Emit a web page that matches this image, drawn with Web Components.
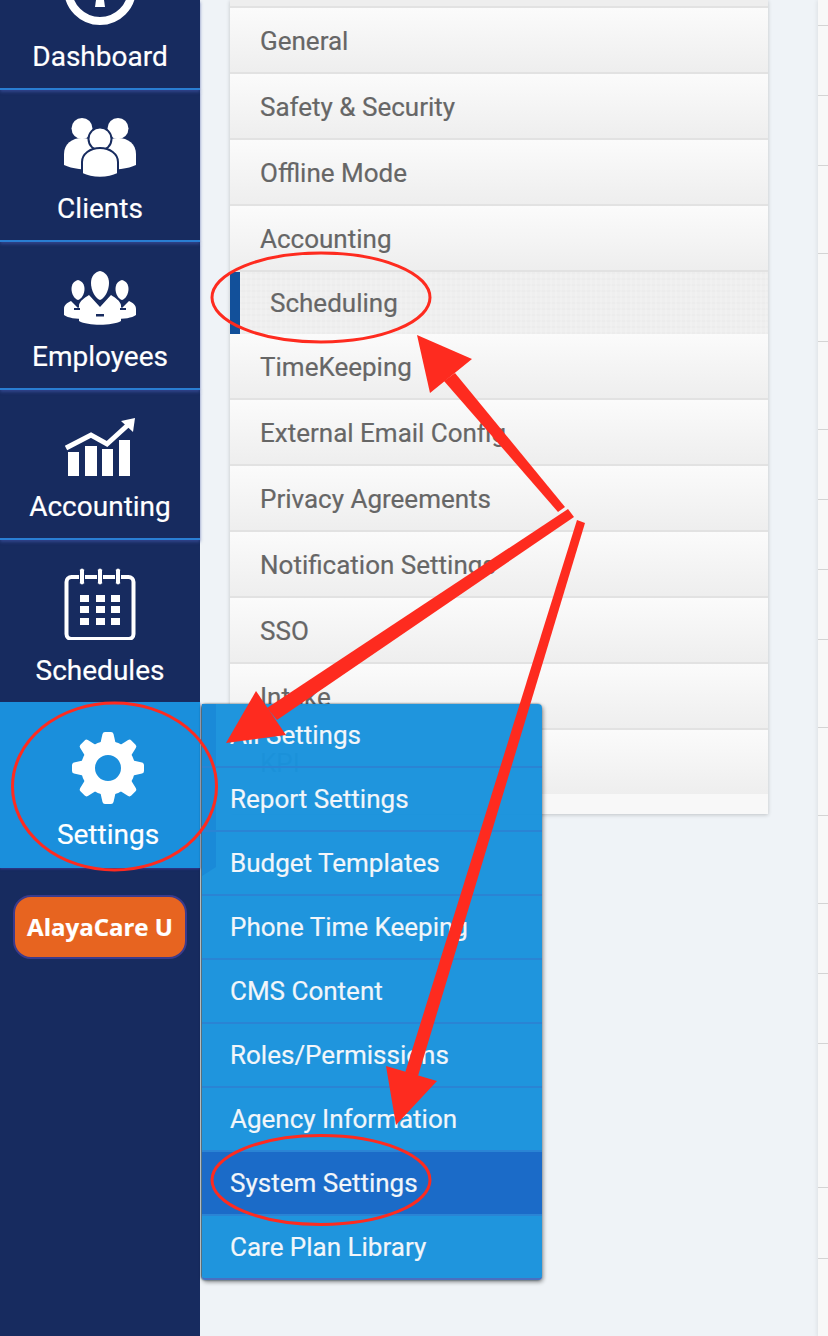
<!DOCTYPE html>
<html lang="en">
<head>
<meta charset="utf-8">
<title>Settings</title>
<style>
	html, body { margin: 0; height: 100%; overflow: hidden; background: #eff3f7; }
</style>
</head>
<body>
<app-shell>
	<side-nav slot="nav">
		<nav-item label="Dashboard" style="--pad:0px">
			<svg slot="icon" width="80" height="26" viewBox="0 0 80 26"><circle cx="40" cy="-11" r="32" fill="none" stroke="#fff" stroke-width="8"/><path d="M36 0h8l1 7H35z" fill="#fff"/></svg>
		</nav-item>
		<nav-item label="Clients" style="--pad:28px">
			<svg slot="icon" width="72" height="60" viewBox="0 0 72 60" fill="#fff" stroke="#172b5f"><g stroke="none"><circle cx="18" cy="10.500" r="10.500"/><circle cx="54" cy="10.500" r="10.500"/><path d="M0 47V36C0 26 8 20 18 20s18 6 18 16v16C20 52 8 51 0 47z"/><path d="M72 47V36c0-10-8-16-18-16s-18 6-18 16v16c16 0 28-1 36-5z"/></g><circle cx="36" cy="21" r="11.500" stroke-width="2"/><path d="M18 56V44c0-8 8-14 18-14s18 6 18 14v12c-10 5-26 5-36 0z" stroke-width="2"/></svg>
		</nav-item>
		<nav-item label="Employees" style="--pad:29px">
			<svg slot="icon" width="72" height="55" viewBox="0 0 72 55" fill="#fff"><path d="M36 0c-5 1-9 5-9 12 0 8 5 16 9 17 4-1 9-9 9-17 0-7-4-11-9-12z"/><path d="M14 9c-4 1-6.500 4-6.500 9 0 5 3 10 6.500 11 3.500-1 6.500-6 6.500-11 0-5-2.500-8-6.500-9z"/><path d="M58 9c-4 1-6.500 4-6.500 9 0 5 3 10 6.500 11 3.500-1 6.500-6 6.500-11 0-5-2.500-8-6.500-9z"/><path d="M25 24l11 12 11-12c5 3 9 6 10 10v16c-9 5-33 5-42 0V34c1-4 5-7 10-10z"/><path d="M7 30l7 7 6-5 1 16c-9 0-17-1-21-4v-6c0-4 3-6 7-8z"/><path d="M65 30l-7 7-6-5-1 16c9 0 17-1 21-4v-6c0-4-3-6-7-8z"/><g fill="#172b5f"><rect x="10" y="37" width="6" height="2"/><rect x="32" y="43" width="8" height="2.500"/><rect x="56" y="37" width="6" height="2"/></g></svg>
		</nav-item>
		<nav-item label="Accounting" style="--pad:28px">
			<svg slot="icon" width="72" height="58" viewBox="0 0 72 58" fill="#fff"><rect x="4" y="34" width="11" height="24"/><rect x="21" y="28" width="12" height="30"/><rect x="38" y="31" width="11" height="27"/><rect x="55" y="22" width="11" height="36"/><path d="M2 30l25-13 16 9 22-20" fill="none" stroke="#fff" stroke-width="5"/><path d="M71 0l-14 3 12 11z"/></svg>
		</nav-item>
		<nav-item label="Schedules" style="--pad:28px">
			<svg slot="icon" width="72" height="72" viewBox="0 0 72 72" fill="#fff"><rect x="2.500" y="9" width="67" height="62" rx="5" fill="none" stroke="#fff" stroke-width="4"/><g stroke="#172b5f" stroke-width="1"><rect x="15.500" y="0" width="5" height="17" rx="2.500"/><rect x="33.500" y="0" width="5" height="17" rx="2.500"/><rect x="51.500" y="0" width="5" height="17" rx="2.500"/></g><rect x="16" y="27" width="9" height="7"/><rect x="32" y="27" width="9" height="7"/><rect x="47" y="27" width="9" height="7"/><rect x="16" y="38" width="9" height="7"/><rect x="32" y="38" width="9" height="7"/><rect x="47" y="38" width="9" height="7"/><rect x="16" y="50" width="9" height="7"/><rect x="32" y="50" width="9" height="7"/><rect x="47" y="50" width="9" height="7"/></svg>
		</nav-item>
		<nav-item label="Settings" active style="--pad:30px">
			<svg slot="icon" width="72" height="72" viewBox="-36 -36 72 72" fill="#fff"><defs><path id="tooth" d="M-8-23l2.500-11q.500-2 2.500-2h6q2 0 2.500 2l2.500 11z"/></defs><circle r="20" fill="none" stroke="#fff" stroke-width="14"/><use href="#tooth"/><use href="#tooth" transform="rotate(45)"/><use href="#tooth" transform="rotate(90)"/><use href="#tooth" transform="rotate(135)"/><use href="#tooth" transform="rotate(180)"/><use href="#tooth" transform="rotate(225)"/><use href="#tooth" transform="rotate(270)"/><use href="#tooth" transform="rotate(315)"/></svg>
		</nav-item>
		<course-button>AlayaCare U</course-button>
	</side-nav>

	<settings-panel slot="main">
		<settings-row stub></settings-row>
		<settings-row>General</settings-row>
		<settings-row>Safety &amp; Security</settings-row>
		<settings-row>Offline Mode</settings-row>
		<settings-row>Accounting</settings-row>
		<settings-row active>Scheduling</settings-row>
		<settings-row>TimeKeeping</settings-row>
		<settings-row>External Email Config</settings-row>
		<settings-row>Privacy Agreements</settings-row>
		<settings-row>Notification Settings</settings-row>
		<settings-row>SSO</settings-row>
		<settings-row>Intake</settings-row>
		<settings-row last>KPI</settings-row>
	</settings-panel>
	<side-rail slot="rail"></side-rail>

	<flyout-menu slot="over">
		<flyout-item>All Settings</flyout-item>
		<flyout-item>Report Settings</flyout-item>
		<flyout-item>Budget Templates</flyout-item>
		<flyout-item>Phone Time Keeping</flyout-item>
		<flyout-item>CMS Content</flyout-item>
		<flyout-item>Roles/Permissions</flyout-item>
		<flyout-item>Agency Information</flyout-item>
		<flyout-item active>System Settings</flyout-item>
		<flyout-item last>Care Plan Library</flyout-item>
	</flyout-menu>
	<call-outs slot="over"></call-outs>
</app-shell>

<script>
class AppShell extends HTMLElement {
	constructor() {
		super();
		this.attachShadow({ mode: 'open' });
		this.shadowRoot.innerHTML = `
		<style>
		:host {
			display: flex;
			position: relative;
			width: 828px;
			height: 1336px;
			overflow: hidden;
			background: #eff3f7;
			font-family: Roboto, "Liberation Sans", sans-serif;
			-webkit-text-stroke: .2px;
		}
		.main {
			flex: 1;
			display: flex;
			justify-content: space-between;
			align-items: flex-start;
			padding-left: 30px;
		}
		</style>
		<slot name="nav"></slot>
		<div class="main">
			<slot name="main"></slot>
			<slot name="rail"></slot>
		</div>
		<slot name="over"></slot>
		`;
	}
}

class SideNav extends HTMLElement {
	constructor() {
		super();
		this.attachShadow({ mode: 'open' });
		this.shadowRoot.innerHTML = `
		<style>
		:host {
			display: flex;
			flex-direction: column;
			flex: none;
			width: 200px;
			height: 1336px;
			background: #172b5f;
		}
		</style>
		<slot></slot>
		`;
	}
}

class NavItem extends HTMLElement {
	constructor() {
		super();
		this.attachShadow({ mode: 'open' });
		this.shadowRoot.innerHTML = `
		<style>
		:host {
			display: flex;
			flex-direction: column;
			align-items: center;
			gap: 15px;
			padding: var(--pad, 28px) 0 15px;
			border-bottom: 2px solid #2a7fd4;
			box-shadow: 0 2px 3px rgba(60, 80, 160, .7);
			color: #fff;
			font-size: 28px;
			line-height: 32px;
		}
		:host([label="Schedules"]) {
			border-bottom: 0;
			box-shadow: none;
		}
		:host([active]) {
			background: #1a8fdc;
			padding-left: 16px;
			padding-bottom: 17px;
			border-bottom: 0;
			box-shadow: 0 1px 2px rgba(60, 60, 160, .8);
		}
		::slotted(svg) {
			display: block;
		}
		</style>
		<slot name="icon"></slot>
		<span class="label"></span>
		`;
		this.shadowRoot.querySelector('.label').textContent = this.getAttribute('label');
	}
}

class CourseButton extends HTMLElement {
	constructor() {
		super();
		this.attachShadow({ mode: 'open' });
		this.shadowRoot.innerHTML = `
		<style>
		:host {
			display: flex;
			align-items: center;
			justify-content: center;
			box-sizing: border-box;
			height: 64px;
			margin: 27px 13px 0;
			padding-bottom: 2px;
			border: 2px solid #3b3b8c;
			border-radius: 18px;
			background: #e76420;
			color: #fff;
			font: 700 24px "Open Sans", sans-serif;
		}
		</style>
		<slot></slot>
		`;
	}
}

class SettingsPanel extends HTMLElement {
	constructor() {
		super();
		this.attachShadow({ mode: 'open' });
		this.shadowRoot.innerHTML = `
		<style>
		:host {
			display: flex;
			flex-direction: column;
			width: 538px;
			padding-bottom: 20px;
			background: #f8f8f8;
			box-shadow: 0 1px 4px rgba(0, 0, 0, .2);
		}
		</style>
		<slot></slot>
		`;
	}
}

class SettingsRow extends HTMLElement {
	constructor() {
		super();
		this.attachShadow({ mode: 'open' });
		this.shadowRoot.innerHTML = `
		<style>
		:host {
			display: flex;
			align-items: center;
			box-sizing: border-box;
			height: 66px;
			padding: 2px 0 0 30px;
			border-bottom: 2px solid #e2e2e2;
			background: linear-gradient(#fbfbfb, #eeeeee);
			color: #666;
			font-size: 26px;
		}
		:host([stub]) {
			height: 8px;
			padding: 0;
			background: #eeeeee;
		}
		:host([last]) {
			height: 64px;
			border-bottom: 0;
		}
		:host([active]) {
			height: 62px;
			padding: 0 0 0 30px;
			border-bottom: 0;
			border-left: 10px solid #12509a;
			background:
				repeating-linear-gradient(90deg, rgba(255, 255, 255, .14) 0 2px, transparent 2px 5px),
				repeating-linear-gradient(0deg, rgba(0, 0, 0, .012) 0 2px, transparent 2px 6px),
				#efefef;
		}
		</style>
		<slot></slot>
		`;
	}
}

class SideRail extends HTMLElement {
	constructor() {
		super();
		this.attachShadow({ mode: 'open' });
		const heights = [26, 70, 70, 88, 88, 88, 70, 70, 70, 88, 88, 88, 70, 70, 144, 71, 79];
		this.shadowRoot.innerHTML = `
		<style>
		:host {
			display: flex;
			flex-direction: column;
			flex: none;
			width: 10px;
			background: #f8f8f8;
			box-shadow: -1px 0 4px rgba(0, 0, 0, .08);
		}
		div {
			box-sizing: border-box;
			border-bottom: 1px solid #d4d4d4;
		}
		</style>
		${heights.map((h) => `<div style="height:${h}px"></div>`).join('')}
		`;
	}
}

class FlyoutMenu extends HTMLElement {
	constructor() {
		super();
		this.attachShadow({ mode: 'open' });
		this.shadowRoot.innerHTML = `
		<style>
		:host {
			display: flex;
			flex-direction: column;
			position: absolute;
			left: 202px;
			top: 704px;
			width: 340px;
			border-radius: 4px;
			background: rgba(26, 146, 220, .975);
			box-shadow: -1px 0 2px rgba(0, 40, 60, .8), 1px 2px 4px rgba(0, 0, 0, .45);
		}
		.flap {
			position: absolute;
			left: 0;
			top: 0;
			width: 14px;
			height: 172px;
			background: #1a8ad8;
			clip-path: polygon(0 0, 100% 0, 100% 163px, 0 100%);
		}
		</style>
		<div class="flap"></div>
		<slot></slot>
		`;
	}
}

class FlyoutItem extends HTMLElement {
	constructor() {
		super();
		this.attachShadow({ mode: 'open' });
		this.shadowRoot.innerHTML = `
		<style>
		:host {
			display: flex;
			align-items: center;
			position: relative;
			box-sizing: border-box;
			height: 64px;
			padding-left: 28px;
			border-bottom: 2px solid #2a84d4;
			color: #f2f6fa;
			font-size: 26px;
		}
		:host([active]) {
			background: #1b6bc8;
		}
		:host([last]) {
			border-bottom: 2px solid #4a6fc0;
			border-radius: 0 0 4px 4px;
		}
		</style>
		<slot></slot>
		`;
	}
}

class CallOuts extends HTMLElement {
	constructor() {
		super();
		this.attachShadow({ mode: 'open' });
		this.shadowRoot.innerHTML = `
		<style>
		:host {
			display: block;
			position: absolute;
			left: 0;
			top: 0;
		}
		svg {
			display: block;
		}
		</style>
		<svg width="828" height="1336" viewBox="0 0 828 1336" fill="none" stroke="#fe2b1f">
			<ellipse cx="321" cy="297.500" rx="109" ry="44.500" stroke-width="3"/>
			<ellipse cx="114.500" cy="786.500" rx="102" ry="83.500" stroke-width="3"/>
			<ellipse cx="321" cy="1180" rx="109" ry="44.500" stroke-width="3"/>
			<g fill="#fe2b1f" stroke="none">
				<polygon points="558,512 565,507 455,373 444,381"/>
				<polygon points="417,335 472,359 430,393"/>
				<polygon points="568,509 574,517 277,720 267,708"/>
				<polygon points="226,743 256,691 286,735"/>
				<polygon points="577,520 585,523 418,1076 405,1073"/>
				<polygon points="396,1125 386,1066 437,1081"/>
			</g>
		</svg>
		`;
	}
}

customElements.define('app-shell', AppShell);
customElements.define('side-nav', SideNav);
customElements.define('nav-item', NavItem);
customElements.define('course-button', CourseButton);
customElements.define('settings-panel', SettingsPanel);
customElements.define('settings-row', SettingsRow);
customElements.define('side-rail', SideRail);
customElements.define('flyout-menu', FlyoutMenu);
customElements.define('flyout-item', FlyoutItem);
customElements.define('call-outs', CallOuts);
</script>
</body>
</html>
